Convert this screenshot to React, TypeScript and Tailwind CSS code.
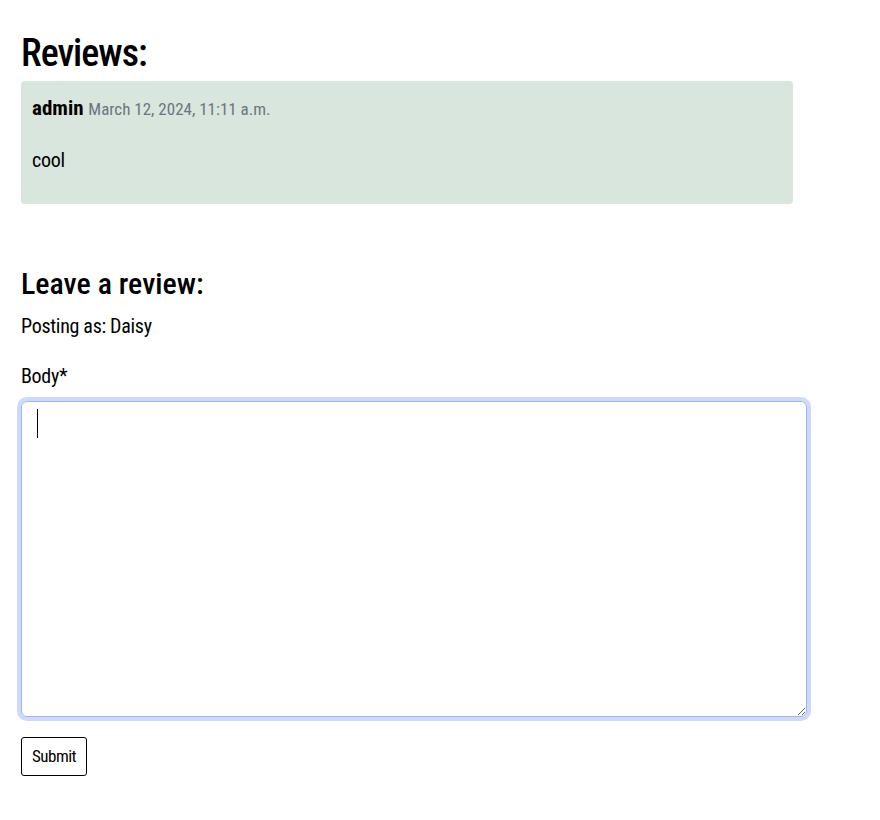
export default function App() {
  return (
    <div className="min-h-[820px] bg-white px-[21px] pt-[29px] font-['Roboto',sans-serif] text-black font-stretch-condensed">
      {/* Reviews */}
      <h2 className="text-[38px] font-medium leading-[48px] tracking-[-1px]">Reviews:</h2>
      <div className="mt-[4px] w-[772px] rounded-[4px] bg-[#d8e6dd] px-[11px] pt-[12px] pb-[29px]">
        <p className="text-[21px] leading-[30px]">
          <span className="font-bold">admin</span>{' '}
          <span className="text-[17px] text-[#6c757d]">March 12, 2024, 11:11 a.m.</span>
        </p>
        <p className="mt-[21px] text-[20px] leading-[30px] tracking-[-0.3px]">cool</p>
      </div>

      {/* Leave a review */}
      <h3 className="mt-[62px] text-[30px] font-medium leading-[36px]">Leave a review:</h3>
      <p className="mt-[9px] text-[20px] leading-[30px] tracking-[-0.3px]">Posting as: Daisy</p>
      <form className="mt-[20px] flex flex-col items-start">
        <label className="text-[20px] leading-[30px] tracking-[-0.3px]">Body*</label>
        <div className="relative mt-[10px]">
          <textarea className="block h-[316px] w-[786px] rounded-[6px] border border-[#9db5f3] px-[16px] py-[8px] text-[20px] outline-none ring-4 ring-[#cfd9fb]" />
          <span className="pointer-events-none absolute top-[8px] left-[16px] h-[29px] w-px bg-black" />
        </div>
        <button
          type="button"
          className="mt-[20px] h-[39px] rounded-[3px] border border-black px-[10px] text-[17px] leading-none tracking-[-0.5px]"
        >
          Submit
        </button>
      </form>
    </div>
  );
}
